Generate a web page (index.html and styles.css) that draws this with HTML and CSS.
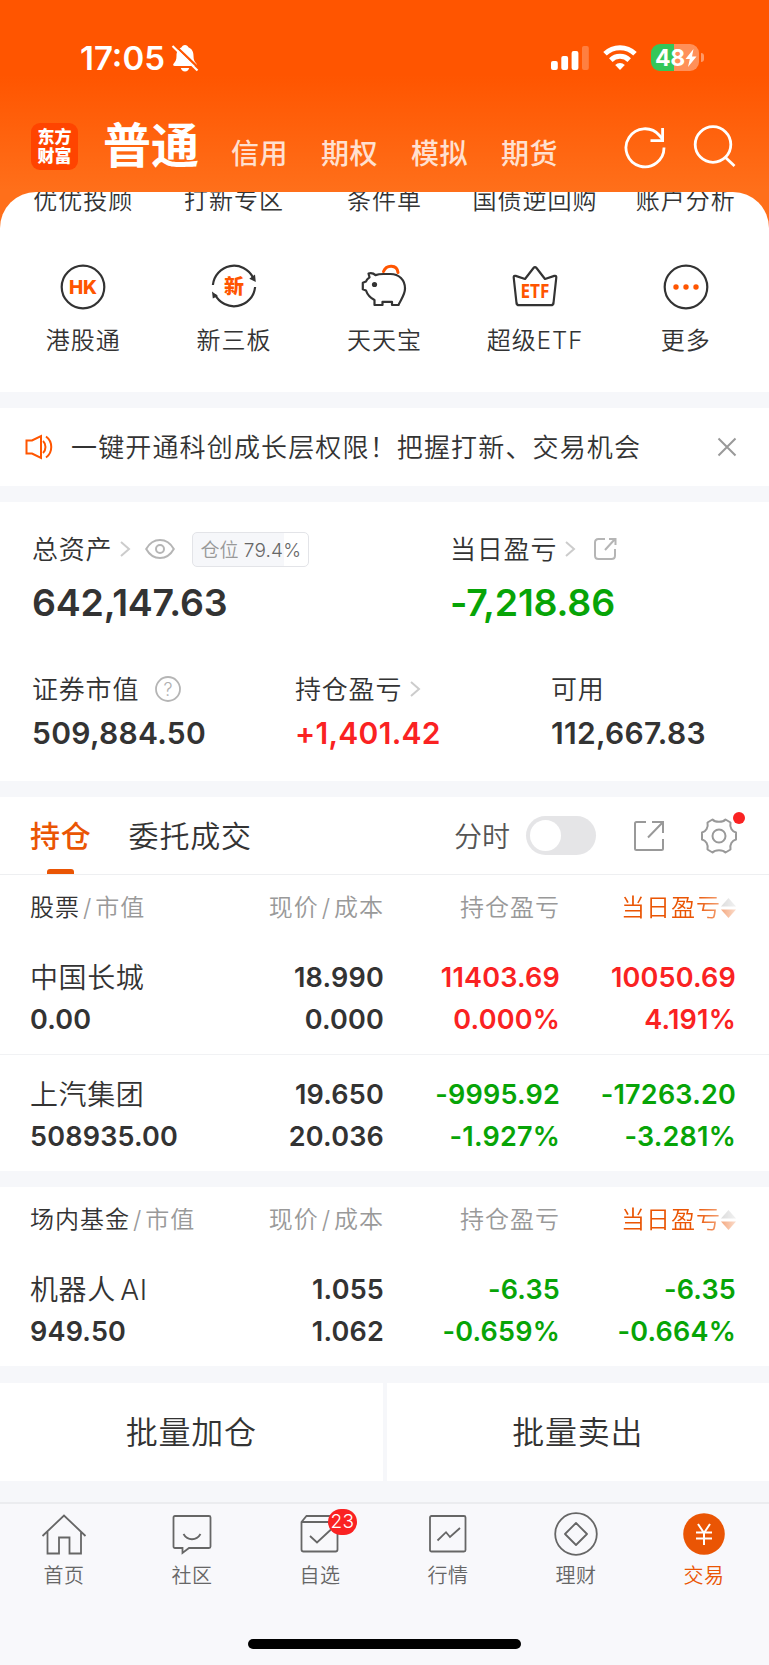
FILE: index.html
```html
<!DOCTYPE html>
<html lang="zh-CN">
<head>
    <meta charset="UTF-8">
    <title>东方财富 - 交易</title>
    <link rel="stylesheet" href="styles.css">
</head>
<body>
    <header class="header">
        <div class="status">
            <span class="time">17:05</span>
            <svg class="bell" width="28" height="30" viewBox="0 0 28 30">
                <path d="M14 2c-1.800 0-3 1-3.400 2.300C7 5.800 5.500 9 5.500 13c0 4-1 5.500-2.800 7.500C1.600 21.800 2.200 23 3.800 23h20.400c1.600 0 2.200-1.200 1.100-2.500-1.800-2-2.800-3.500-2.800-7.500 0-4-1.500-7.200-5.100-8.700C17 3 15.800 2 14 2z" fill="#fff"/>
                <path d="M9.800 25h8.400c-.4 2-2 3.400-4.200 3.400S10.200 27 9.800 25z" fill="#fff"/>
                <path d="M3 1.500L28.500 26" stroke="#ff5600" stroke-width="2.400"/>
                <path d="M1.500 3L26.500 27.500" stroke="#fff" stroke-width="2.200"/>
            </svg>
            <div class="status-right">
                <svg width="38" height="26" viewBox="0 0 38 26" fill="#fff">
                    <rect x="0" y="16" width="6.800" height="9" rx="2"/>
                    <rect x="10.300" y="11" width="6.800" height="14" rx="2"/>
                    <rect x="20.600" y="6" width="6.800" height="19" rx="2"/>
                    <rect x="31" y="1" width="6.800" height="24" rx="2" opacity=".25"/>
                </svg>
                <svg class="wifi" width="34" height="26" viewBox="0 0 34 26" fill="none" stroke="#fff" stroke-width="5">
                    <path d="M2 8.800a21.500 21.500 0 0 1 30 0"/>
                    <path d="M7.800 15.100a13.200 13.200 0 0 1 18.400 0"/>
                    <path d="M17 25l-4.800-4.900a6.800 6.800 0 0 1 9.600 0z" fill="#fff" stroke="none"/>
                </svg>
                <div class="battery">
                    <span>48</span>
                    <svg width="12" height="18" viewBox="0 0 12 18"><path d="M8.500 0L.5 10h4.300L3 18l8.500-10.500H7z" fill="#fff"/></svg>
                </div>
                <i class="battery-cap"></i>
            </div>
        </div>
        <nav class="nav">
            <div class="logo"><span>东方</span><span>财富</span></div>
            <span class="nav-main">普通</span>
            <span class="nav-item">信用</span>
            <span class="nav-item">期权</span>
            <span class="nav-item">模拟</span>
            <span class="nav-item">期货</span>
            <svg class="refresh" width="44" height="44" viewBox="0 0 44 44" fill="none" stroke="#fff" stroke-width="2.800">
                <path d="M41 22.500A19 19 0 1 1 36.500 10.500L39.500 14"/>
                <path d="M39.600 3v12.600H27.500"/>
            </svg>
            <svg class="search" width="44" height="44" viewBox="0 0 44 44" fill="none" stroke="#fff" stroke-width="2.800">
                <circle cx="21" cy="19.500" r="17.800"/>
                <path d="M33 32l9.500 9"/>
            </svg>
        </nav>
    </header>

    <section class="menu">
        <div class="menu-row menu-cut">
            <span>优优投顾</span><span>打新专区</span><span>条件单</span><span>国债逆回购</span><span>账户分析</span>
        </div>
        <div class="menu-row">
            <div class="menu-item">
                <svg width="48" height="48" viewBox="0 0 48 48">
                    <circle cx="24" cy="24" r="21.300" class="line"/>
                    <text x="24" y="31" class="icon-text hk">HK</text>
                </svg>
                <span>港股通</span>
            </div>
            <div class="menu-item">
                <svg width="48" height="48" viewBox="0 0 48 48">
                    <path d="M2.900 22A21.200 21.200 0 0 1 43 14.500M45.100 24A21.200 21.200 0 0 1 5 31.500" class="line"/>
                    <path d="M45 11.500l.8 7.500-6.500-3.200zM2.800 35.500L2 28.500l6 4.500z" fill="#333"/>
                    <text x="24" y="31" class="icon-text xin">新</text>
                </svg>
                <span>新三板</span>
            </div>
            <div class="menu-item">
                <svg width="48" height="48" viewBox="0 0 48 48">
                    <path d="M8.500 10.500c3-.8 5.500.2 7 1.600 2.500-.9 5-1.100 8-1.100h7C39 11 45 17 45 25.500c0 6.500-4.500 11.500-6.500 16.500h-6.500v-3.200h-9.500V42h-8v-5c-4-2-7-5-8.500-9.500l-3.200-1.200v-6.500L6 18.500c.5-1.700 1.800-3 3.500-4.200z" class="line"/>
                    <circle cx="14.500" cy="21.500" r="2.600" fill="#333"/>
                    <path d="M23.500 8.500c3-7.300 13.500-7 14.500 1" class="line orange-line"/>
                </svg>
                <span>天天宝</span>
            </div>
            <div class="menu-item">
                <svg width="48" height="48" viewBox="0 0 48 48">
                    <path d="M5.500 40L2.700 14.500c-.1-1.500.8-2 2-1.600L14 16l8.500-11c1-1.200 2-1.200 3 0L34 16l9.300-3.100c1.200-.4 2.100.1 2 1.600L42.500 40c-.2 1.500-1 2.200-2.500 2.200H8c-1.500 0-2.300-.7-2.500-2.200z" class="line"/>
                    <text x="24" y="35" class="icon-text etf" textLength="29" lengthAdjust="spacingAndGlyphs">ETF</text>
                </svg>
                <span>超级ETF</span>
            </div>
            <div class="menu-item">
                <svg width="48" height="48" viewBox="0 0 48 48">
                    <circle cx="24" cy="24" r="21.300" class="line"/>
                    <g fill="#ff5500"><circle cx="14" cy="24" r="2.700"/><circle cx="24" cy="24" r="2.700"/><circle cx="34" cy="24" r="2.700"/></g>
                </svg>
                <span>更多</span>
            </div>
        </div>
    </section>

    <section class="notice">
        <svg width="28" height="26" viewBox="0 0 28 26" fill="none" stroke="#ff5500" stroke-width="2">
            <path d="M1.500 6.500H7L16 2v22l-9-4.500H1.500z"/>
            <path d="M18 7c3.300 3 3.300 9 0 12M21 2.500c7 5 7 16 0 21"/>
        </svg>
        <span class="notice-text">一键开通科创成长层权限！把握打新、交易机会</span>
        <svg width="20" height="20" viewBox="0 0 20 20" stroke="#999" stroke-width="2"><path d="M1.500 1.500l17 17M18.500 1.500l-17 17"/></svg>
    </section>

    <section class="assets">
        <div class="assets-top">
            <div>
                <div class="label">
                    <span>总资产</span>
                    <svg class="arrow" width="12" height="18" viewBox="0 0 12 18"><path d="M2 2l8 7-8 7"/></svg>
                    <svg class="eye" width="30" height="22" viewBox="0 0 30 22" fill="none" stroke="#b5b5b5" stroke-width="2">
                        <path d="M1.200 11C4 6 9 2 15 2s11 4 13.800 9C26 16 21 20 15 20S4 16 1.200 11z"/>
                        <circle cx="15" cy="11" r="4"/>
                    </svg>
                    <div class="position">仓位 <b>79.4%</b></div>
                </div>
                <div class="big">642,147.63</div>
            </div>
            <div>
                <div class="label">
                    <span>当日盈亏</span>
                    <svg class="arrow" width="12" height="18" viewBox="0 0 12 18"><path d="M2 2l8 7-8 7"/></svg>
                    <svg class="share" width="24" height="24" viewBox="0 0 24 24" fill="none" stroke="#b5b5b5" stroke-width="2">
                        <path d="M12 2H5.500Q2 2 2 5.500v13Q2 22 5.500 22h13q3.500 0 3.500-3.500V12M16 2h6.500v6M22 2L12 13"/>
                    </svg>
                </div>
                <div class="big green">-7,218.86</div>
            </div>
        </div>
        <div class="assets-bottom">
            <div>
                <div class="label">
                    <span>证券市值</span>
                    <svg class="help" width="26" height="26" viewBox="0 0 26 26">
                        <circle cx="13" cy="13" r="12" fill="none" stroke="#b5b5b5" stroke-width="1.800"/>
                        <text x="13" y="19.500">?</text>
                    </svg>
                </div>
                <div class="mid">509,884.50</div>
            </div>
            <div>
                <div class="label">
                    <span>持仓盈亏</span>
                    <svg class="arrow" width="12" height="18" viewBox="0 0 12 18"><path d="M2 2l8 7-8 7"/></svg>
                </div>
                <div class="mid red">+1,401.42</div>
            </div>
            <div>
                <div class="label"><span>可用</span></div>
                <div class="mid">112,667.83</div>
            </div>
        </div>
    </section>

    <section class="holdings">
        <div class="tabs">
            <span class="tab active">持仓</span>
            <span class="tab">委托成交</span>
            <span class="tabs-label">分时</span>
            <span class="switch"></span>
            <svg class="tabs-share" width="32" height="32" viewBox="0 0 32 32" fill="none" stroke="#999" stroke-width="2">
                <path d="M13 2H3.500Q2 2 2 3.500v25Q2 30 3.500 30h25q1.500 0 1.500-1.500V19M19 2h11v11M30 2L15 17.500"/>
            </svg>
            <div class="gear">
                <svg width="38" height="38" viewBox="0 0 38 38" fill="none" stroke="#999" stroke-width="2">
                    <path d="M12.500 2.500C15 5.500 23 5.500 25.500 2.500L30.500 5.500C29.500 10.500 32 14.500 36 15.500V22.500C32 23.500 29.500 27.500 30.500 32.500L25.500 35.500C23 32.500 15 32.500 12.500 35.500L7.500 32.500C8.500 27.500 6 23.500 2 22.500V15.500C6 14.500 8.500 10.500 7.500 5.500z" stroke-linejoin="round"/>
                    <circle cx="19" cy="19" r="6.500"/>
                </svg>
                <i class="dot"></i>
            </div>
        </div>
        <div class="row row-head">
            <span><em>股票</em><i>/</i>市值</span>
            <span>现价<i>/</i>成本</span>
            <span>持仓盈亏</span>
            <span class="sort">当日盈亏<svg width="15" height="22" viewBox="0 0 15 22"><path d="M0 9.500L7.500 1 15 9.500z" fill="#bbb"/><path d="M0 12.500h15L7.500 21z" fill="#ea5504"/></svg></span>
        </div>
        <div class="row">
            <div><p class="name">中国长城</p><p>0.00</p></div>
            <div><p>18.990</p><p>0.000</p></div>
            <div class="red"><p>11403.69</p><p>0.000%</p></div>
            <div class="red"><p>10050.69</p><p>4.191%</p></div>
        </div>
        <div class="row row-last">
            <div><p class="name">上汽集团</p><p>508935.00</p></div>
            <div><p>19.650</p><p>20.036</p></div>
            <div class="green"><p>-9995.92</p><p>-1.927%</p></div>
            <div class="green"><p>-17263.20</p><p>-3.281%</p></div>
        </div>
    </section>

    <section class="holdings">
        <div class="row row-head">
            <span><em>场内基金</em><i>/</i>市值</span>
            <span>现价<i>/</i>成本</span>
            <span>持仓盈亏</span>
            <span class="sort">当日盈亏<svg width="15" height="22" viewBox="0 0 15 22"><path d="M0 9.500L7.500 1 15 9.500z" fill="#bbb"/><path d="M0 12.500h15L7.500 21z" fill="#ea5504"/></svg></span>
        </div>
        <div class="row row-last">
            <div><p class="name">机器人 AI</p><p>949.50</p></div>
            <div><p>1.055</p><p>1.062</p></div>
            <div class="green"><p>-6.35</p><p>-0.659%</p></div>
            <div class="green"><p>-6.35</p><p>-0.664%</p></div>
        </div>
    </section>

    <section class="actions">
        <div class="action">批量加仓</div>
        <div class="action">批量卖出</div>
    </section>

    <footer class="tabbar">
        <div class="tabbar-items">
            <div class="tabbar-item">
                <svg width="46" height="46" viewBox="0 0 46 46"><path d="M1.500 24L23 3.500 44.500 24M6.500 20v21.500H18V25.500h10.500v16H40V20"/></svg>
                <span>首页</span>
            </div>
            <div class="tabbar-item">
                <svg width="46" height="46" viewBox="0 0 46 46"><path d="M6 4h34q1.500 0 1.500 1.500v29Q41.500 36 40 36H20l-6.500 5v-5H6q-1.500 0-1.500-1.500v-29Q4.500 4 6 4zM14.500 22c4 7 13 7 17 0"/></svg>
                <span>社区</span>
            </div>
            <div class="tabbar-item">
                <svg width="46" height="46" viewBox="0 0 46 46"><path d="M9.500 4h27L40.500 10v27.500q0 2-2 2h-32q-2 0-2-2V10zM4.500 10h36M13 24l7 6.500L34 17.500"/></svg>
                <i class="badge">23</i>
                <span>自选</span>
            </div>
            <div class="tabbar-item">
                <svg width="46" height="46" viewBox="0 0 46 46"><rect x="5" y="4" width="35.500" height="35.500" rx="1.500"/><path d="M12.500 28.500l8.500-8.300 4 4.800 10-9"/></svg>
                <span>行情</span>
            </div>
            <div class="tabbar-item">
                <svg width="46" height="46" viewBox="0 0 46 46"><circle cx="23" cy="22" r="20.800"/><path d="M23 11l11 11-11 11-11-11z" stroke-linejoin="round"/></svg>
                <span>理财</span>
            </div>
            <div class="tabbar-item current">
                <svg width="46" height="46" viewBox="0 0 46 46"><circle cx="23" cy="22" r="20.800" class="coin"/><path d="M17 12l6 9 6-9M23 21v12M15 20.500h16M15 26.500h16" class="yen"/></svg>
                <span>交易</span>
            </div>
        </div>
        <div class="home-bar"></div>
    </footer>
</body>
</html>
```
FILE: styles.css
```css
* { box-sizing: border-box; }
body { margin: 0; width: 769px; background: #f6f7fa; color: #333; font-family: Inter, "Noto Sans CJK SC", sans-serif; font-size: 24px; font-weight: 350; }
p { margin: 0; }
em, i, b { font-style: normal; font-weight: inherit; }
svg { display: block; flex: none; }
.red { color: #fa2222; }
.green { color: #07a407; }

/* header */
.header { height: 233px; background: linear-gradient(#ff5500 0, #ff5500 75px, #ff6f1a 190px, #ff6f1a 100%); color: #fff; }
.status { display: flex; align-items: center; height: 115px; padding: 0 65px 0 80px; }
.time { font-size: 33px; font-weight: 600; letter-spacing: 0; }
.bell { margin-left: 6px; }
.status-right { display: flex; align-items: center; margin-left: auto; }
.wifi { margin-left: 14px; }
.battery { display: flex; align-items: center; width: 48px; height: 27px; margin-left: 14px; padding-left: 4px; border-radius: 9px; background: linear-gradient(90deg, #34c759 48%, rgba(255,255,255,0.35) 48%); font-size: 23px; font-weight: 700; letter-spacing: -0.300px; }
.battery-cap { width: 3px; height: 9px; margin-left: 2px; border-radius: 0 4px 4px 0; background: rgba(255,255,255,0.4); }
.nav { display: flex; height: 76px; padding-left: 31px; }
.logo { display: flex; flex: none; flex-direction: column; justify-content: center; width: 47px; height: 47px; margin-top: 8px; border-radius: 9px; background: #ff4400; font-size: 17px; font-weight: 900; line-height: 19px; text-align: center; }
.nav-main { flex: none; width: 153px; padding-left: 25px; font-size: 48px; font-weight: 700; line-height: 62px; }
.nav-item { flex: none; width: 90px; font-size: 28px; font-weight: 500; line-height: 78px; letter-spacing: 0.500px; color: #ffe0d0; }
.refresh { margin: 10px 0 0 32px; }
.search { margin: 10px 0 0 25px; }

/* shortcut menu */
.menu { height: 200px; margin-top: -41px; padding: 0 8px 0 8px; border-radius: 36px 36px 0 0; background: #fff; overflow: hidden; }
.menu-row { display: grid; grid-template-columns: repeat(5, 1fr); text-align: center; letter-spacing: 1px; white-space: nowrap; }
.menu-cut { height: 71px; line-height: 18px; }
.menu-item { display: flex; flex-direction: column; align-items: center; line-height: 60px; }
.line { fill: none; stroke: #333; stroke-width: 2.200; stroke-linejoin: round; }
.orange-line { stroke: #ff5500; stroke-width: 3; stroke-linecap: round; }
.icon-text { fill: #ff5500; text-anchor: middle; font-weight: 800; letter-spacing: 0; }
.hk { font-size: 19px; }
.xin { font-size: 20px; }
.etf { font-size: 20px; font-weight: 700; font-family: "Open Sans", sans-serif; }

/* notice */
.notice { display: flex; align-items: center; height: 78px; margin-top: 16px; padding: 0 32px 0 25px; background: #fff; }
.notice-text { flex: 1; margin-left: 18px; padding-bottom: 4px; font-size: 26px; letter-spacing: 1.150px; }

/* assets */
.assets { height: 279px; margin-top: 16px; padding: 26px 0 0 32px; background: #fff; }
.assets-top { display: grid; grid-template-columns: 418px 1fr; height: 140px; }
.assets-bottom { display: grid; grid-template-columns: 263px 256px 1fr; }
.label { display: flex; align-items: center; height: 42px; font-size: 26px; letter-spacing: 0.800px; }
.label span { padding-bottom: 3px; }
.arrow { margin-left: 7px; fill: none; stroke: #ccc; stroke-width: 2; }
.eye { margin-left: 14px; }
.share { margin-left: 17px; }
.help { margin-left: 16px; }
.help text { fill: #b0b0b0; font-size: 18px; text-anchor: middle; letter-spacing: 0; }
.position { height: 35px; margin-left: 17px; padding: 0 7px; border: 1px solid #e3e4e8; border-radius: 5px; background: linear-gradient(90deg, #f6f7fa 79.4%, #fff 79.4%); font-size: 19px; line-height: 35px; letter-spacing: 0; color: #999; }
.position b { color: #666; letter-spacing: 0.200px; }
.big { font-size: 37.500px; font-weight: 600; line-height: 66px; letter-spacing: -0.200px; }
.mid { font-size: 30px; font-weight: 600; line-height: 46px; letter-spacing: 0.300px; }

/* holdings */
.holdings { margin-top: 16px; background: #fff; }
.tabs { display: flex; align-items: center; height: 78px; padding-left: 30px; border-bottom: 1px solid #eeeff1; font-size: 30px; }
.tab { height: 77px; margin-right: 37px; line-height: 78px; letter-spacing: 0.800px; }
.active { display: flex; flex-direction: column; align-items: center; color: #ea5504; font-weight: 500; }
.active::after { content: ""; flex: none; width: 27px; height: 5px; margin-top: -6px; border-radius: 3px 3px 0 0; background: #ea5504; }
.tabs-label { margin-left: auto; padding-bottom: 1px; font-size: 28px; color: #555; }
.switch { width: 70px; height: 39px; margin-left: 16px; padding: 4px; border-radius: 20px; background: #e5e5e7; }
.switch::after { content: ""; display: block; width: 31px; height: 31px; border-radius: 50%; background: #fff; }
.tabs-share { margin-left: 37px; }
.gear { position: relative; margin: 0 31px 0 35px; }
.dot { position: absolute; top: -5px; right: -7px; width: 12px; height: 12px; border-radius: 50%; background: #fa2222; }
.row { display: grid; grid-template-columns: 200px 154px 176px 176px; height: 117px; padding: 19px 0 0 30px; border-bottom: 1px solid #f1f2f4; font-size: 27px; font-weight: 600; line-height: 42px; letter-spacing: 0.200px; text-align: right; }
.row > :first-child { text-align: left; }
.row-last { height: 116px; border: 0; }
.name { font-size: 28px; font-weight: 350; letter-spacing: 0.600px; word-spacing: -4px; }
.row-head { height: 63px; padding-top: 0; border: 0; font-size: 24px; font-weight: 350; line-height: 65px; letter-spacing: 1px; color: #999; }
.row-head em { color: #333; }
.row-head i { margin: 0 3px; }
.row-head .sort { display: flex; align-items: center; justify-content: flex-end; color: #ea5504; -webkit-mask-image: linear-gradient(90deg, #000 78%, rgba(0,0,0,0.2) 100%); mask-image: linear-gradient(90deg, #000 78%, rgba(0,0,0,0.2) 100%); }

/* batch actions */
.actions { display: grid; grid-template-columns: 1fr 1fr; gap: 4px; margin-top: 17px; }
.action { height: 98px; background: #fff; font-size: 32px; line-height: 100px; text-align: center; letter-spacing: 0.800px; }

/* bottom tab bar */
.tabbar { height: 163px; margin-top: 21px; border-top: 2px solid #ebecef; background: #f8f8fb; }
.tabbar-items { display: grid; grid-template-columns: repeat(6, 1fr); height: 135px; padding: 8px 1px 0 0; }
.tabbar-item { position: relative; display: flex; flex-direction: column; align-items: center; font-size: 20px; line-height: 36px; letter-spacing: 0.500px; color: #666; }
.tabbar-item svg { fill: none; stroke: #666; stroke-width: 1.800; }
.tabbar-item .coin { fill: #ea5504; stroke: none; }
.tabbar-item .yen { stroke: #fff; stroke-width: 2; }
.tabbar-item.current { color: #ea5504; }
.badge { position: absolute; top: -3px; left: 72px; width: 29px; height: 26px; border-radius: 13px; background: #fa2222; color: #fff; font-size: 19px; line-height: 26px; text-align: center; }
.home-bar { width: 273px; height: 10px; margin: 0 auto; border-radius: 5px; background: #000; }
```
